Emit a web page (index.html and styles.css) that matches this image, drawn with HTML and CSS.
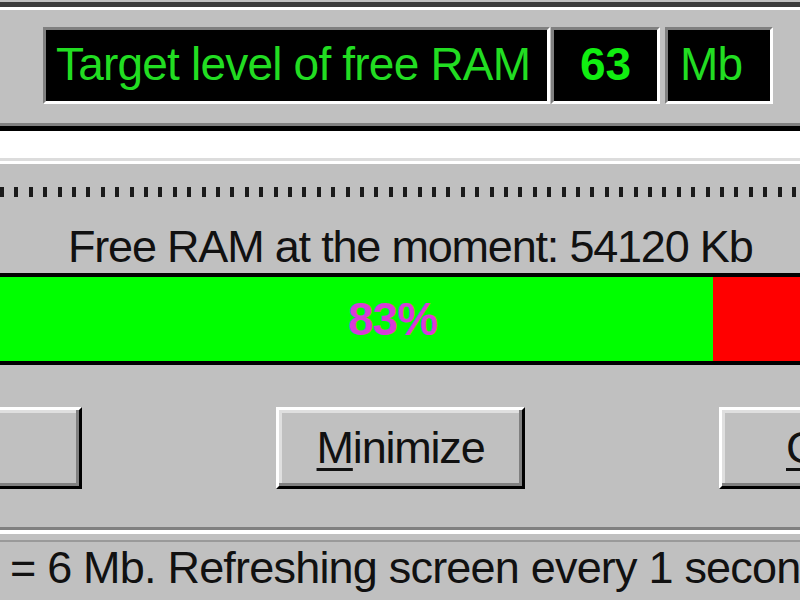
FILE: index.html
```html
<!DOCTYPE html>
<html lang="en">
<head>
<meta charset="UTF-8">
<title>Free RAM</title>
<link rel="stylesheet" href="styles.css">
</head>
<body>

<div class="settings">
    <div class="lcd lcd-label">Target level of free RAM</div>
    <div class="lcd lcd-value">63</div>
    <div class="lcd lcd-unit">Mb</div>
</div>

<div class="gap"></div>

<div class="monitor">
    <div class="ruler"></div>
    <div class="free-label">Free RAM at the moment: 54120 Kb</div>
    <div class="meter">
        <div class="meter-free"></div>
        <span class="meter-text">83%</span>
    </div>
    <div class="buttons">
        <button class="btn"></button>
        <button class="btn"><u>M</u>inimize</button>
        <button class="btn btn-left"><u>C</u>lose</button>
    </div>
</div>

<div class="status">
    <div class="status-field">= 6 Mb. Refreshing screen every 1 second</div>
</div>

</body>
</html>
```

FILE: styles.css
```css
body {
    margin: 0;
    padding-top: 2px;
    width: 800px;
    height: 600px;
    overflow: hidden;
    background: #c0c0c0;
    font-family: "Liberation Sans", Arial, sans-serif;
    font-size: 45px;
    letter-spacing: -1.2px;
    color: #111;
}

/* upper panel with the three black readouts */
.settings {
    display: flex;
    gap: 1px;
    padding: 20px 0 22px 43px;
    border-top: 5px solid #3c3c3c;
    border-bottom: 5px solid #000;
    box-shadow: inset 0 3px 0 #fff, inset 0 -3px 0 #808080;
}
.lcd {
    height: 71px;
    line-height: 69px;
    background: #000;
    color: #22dd22;
    font-size: 46px;
    letter-spacing: -0.8px;
    border: 3px solid;
    border-color: #808080 #fff #fff #808080;
    white-space: nowrap;
}
.lcd-label {
    width: 491px;
    padding-left: 10px;
}
.lcd-value {
    width: 103px;
    text-align: center;
    font-weight: bold;
    color: #11ee11;
    letter-spacing: 0;
}
.lcd-unit {
    width: 90px;
    padding-left: 12px;
    margin-left: 4px;
}

.gap {
    height: 27px;
    background: #fff;
}

/* lower panel */
.monitor {
    padding-top: 26px;
    padding-bottom: 38px;
    border-top: 3px solid #dcdcdc;
    border-bottom: 3px solid #808080;
    box-shadow: inset 0 3px 0 #fff;
}
.ruler {
    height: 10px;
    background: repeating-linear-gradient(90deg, #1a1a1a 0 4px, transparent 4px 14.4px);
}
.free-label {
    margin-top: 24px;
    padding-left: 68px;
    line-height: 52px;
    white-space: nowrap;
}
.meter {
    position: relative;
    display: flex;
    height: 84px;
    background: #ff0000;
    border-top: 4px solid #000;
    border-bottom: 4px solid #000;
}
.meter-free {
    width: 713px;
    background: #00ff00;
}
.meter-text {
    position: absolute;
    left: 348px;
    top: 0;
    line-height: 84px;
    font-size: 46px;
    font-weight: bold;
    letter-spacing: -1px;
    color: #d83ad8;
}

.buttons {
    display: flex;
    gap: 194px;
    margin-top: 42px;
    margin-left: -167px;
}
.btn {
    flex: none;
    width: 249px;
    height: 82px;
    padding: 0;
    background: #c0c0c0;
    font-family: inherit;
    font-size: 45px;
    letter-spacing: -1.2px;
    color: #111;
    border: 3px solid;
    border-color: #fff #000 #000 #fff;
    box-shadow: inset -3px -3px 0 #808080, inset 3px 3px 0 #dfdfdf;
}
.btn-left {
    text-align: left;
    padding-left: 64px;
}
.btn u {
    text-decoration-thickness: 3px;
    text-underline-offset: 5px;
}

.status {
    padding-top: 6px;
    border-top: 4px solid #fff;
}
.status-field {
    padding-left: 10px;
    line-height: 52px;
    letter-spacing: -0.8px;
    border-top: 2px solid #9a9a9a;
    white-space: nowrap;
}
```
